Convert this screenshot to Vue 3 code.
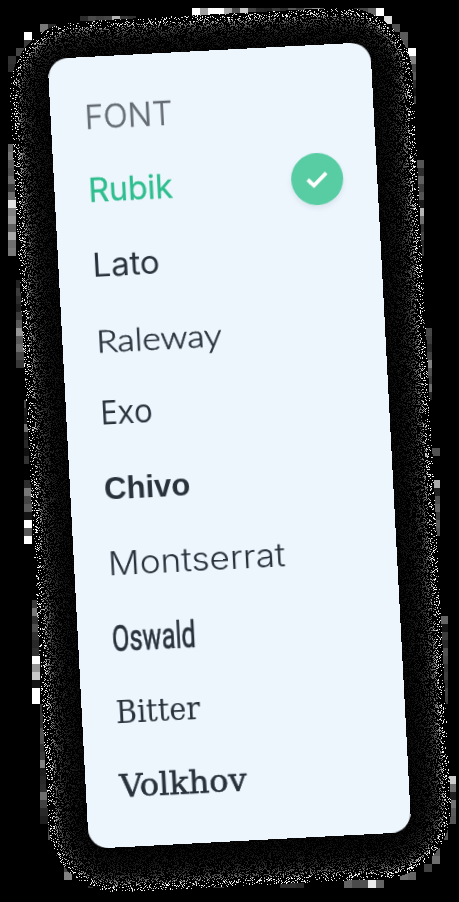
<script setup>
import { onMounted, ref } from 'vue'

const fonts = [
  { name: 'Rubik', cls: 'rubik', selected: true },
  { name: 'Lato', cls: 'lato' },
  { name: 'Raleway', cls: 'raleway' },
  { name: 'Exo', cls: 'exo' },
  { name: 'Chivo', cls: 'chivo' },
  { name: 'Montserrat', cls: 'montserrat' },
  { name: 'Oswald', cls: 'oswald' },
  { name: 'Bitter', cls: 'bitter' },
  { name: 'Volkhov', cls: 'volkhov' },
]

const grain = ref(null)

// Horizontal and vertical runs of 8px tiles at the rim: [column, row, grey levels]
const across = [
  [3, 4, [255]], [3, 5, [60]], [2, 6, [70]], [5, 3, [120, 40]],
  [10, 2, [45, 75, 65, 70, 180, 60, 50]],
  [24, 1, [255, 160, 255, 255, 165, 80, 200, 70, 40, 35, 60, 45, 90, 60, 110, 150, 90, 60, 100, 60, 45, 70, 100, 255]],
  [48, 2, [220]], [49, 3, [80]], [11, 110, [50, 55, 40, 35, 50, 30]],
  [22, 110, [60, 50, 55, 60, 45, 50]], [35, 110, [45, 45, 40]],
  [43, 110, [100, 75, 80, 235, 100]], [50, 109, [110, 100]], [53, 108, [65]],
  [8, 108, [70, 30]], [8, 109, [130]],
]
const down = [
  [1, 7, [50, 45]], [1, 18, [100, 120, 90, 80, 110, 60, 110, 225, 130, 150, 95, 170, 110, 120]],
  [2, 35, [35, 60, 45, 30, 60, 90, 150, 90, 110, 70, 55]],
  [3, 50, [70, 30, 20, 110, 30, 40, 15, 50]], [3, 60, [45, 120, 70, 90, 20, 255, 90, 255]],
  [4, 75, [60, 120, 50, 80, 50, 40, 50, 255, 150, 200, 20, 255, 255]],
  [5, 88, [50, 50, 45, 80, 80, 50, 60, 130, 30, 40, 45, 110, 65, 40, 30]],
  [6, 103, [60, 80]], [7, 105, [70, 60]],
  [50, 4, [90, 80]], [51, 6, [255, 130, 70, 90, 45, 20, 70]],
  [52, 20, [85, 45, 95, 60, 85, 25, 180, 110, 50, 70, 40, 60]],
  [53, 41, [70, 60, 40, 65, 130, 80, 60, 110, 40]],
  [54, 56, [80]], [54, 60, [170, 30, 80, 100, 60, 90, 80]],
  [55, 77, [100, 20, 60, 40, 80, 70, 50, 60, 45, 65, 60]],
  [56, 97, [205, 110, 30, 115, 90, 85]], [55, 103, [60, 85]], [54, 106, [90, 110]],
]

onMounted(() => {
  const W = 459
  const H = 902
  const ctx = grain.value.getContext('2d')
  const tile = (c, r, v) => {
    ctx.fillStyle = `rgb(${v},${v},${v})`
    ctx.fillRect(c * 8, r * 8, 8, 8)
  }
  across.forEach(([c, r, vs]) => vs.forEach((v, i) => tile(c + i, r, v)))
  down.forEach(([c, r, vs]) => vs.forEach((v, i) => tile(c, r + i, v)))

  const img = ctx.getImageData(0, 0, W, H)
  const reach = 40
  const sin = Math.sin(Math.PI / 60)
  const cos = Math.cos(Math.PI / 60)
  let seed = 90217
  const random = () => {
    seed = (Math.imul(seed, 1664525) + 1013904223) >>> 0
    return seed / 4294967296
  }
  for (let y = 0; y < H; y++) {
    for (let x = 0; x < W; x++) {
      const dx = x - 230
      const dy = y - 449.5
      const qx = Math.abs(cos * dx - sin * dy) - 131.5
      const qy = Math.abs(sin * dx + cos * dy) - 366
      const d = Math.hypot(Math.max(qx, 0), Math.max(qy, 0)) - 30
      if (d > reach) continue
      const t = Math.max(0, d / reach)
      const alpha = Math.max(1, 22 * (1 - t) ** 1.5)
      const density = t < 0.75 ? 0.37 : 0.37 - (t - 0.75) * 1.05
      const lit = random() < density
      const v = lit ? Math.min(255, (255 / alpha) * (0.6 + random() * 0.8)) : 0
      const i = (y * W + x) * 4
      img.data[i] = img.data[i + 1] = img.data[i + 2] = v
      img.data[i + 3] = 255
    }
  }
  ctx.putImageData(img, 0, 0)
})
</script>

<template>
  <main class="stage">
    <canvas ref="grain" class="grain" width="459" height="902"></canvas>
    <section class="card">
      <h1 class="title"><span>FONT</span></h1>
      <ul class="list">
        <li v-for="f in fonts" :key="f.name" class="row">
          <span class="name" :class="f.cls">{{ f.name }}</span>
          <span v-if="f.selected" class="badge">
            <svg viewBox="0 0 52 52" width="52" height="52">
              <path d="M16.6 26.6 L22.8 32.6 L35 20" fill="none" stroke="#fff" stroke-width="3.8" />
            </svg>
          </span>
        </li>
      </ul>
    </section>
  </main>
</template>

<style>
body {
  margin: 0;
  background: #000;
}
</style>

<style scoped>
.stage {
  position: relative;
  display: flex;
  justify-content: center;
  align-items: center;
  width: 459px;
  height: 902px;
  overflow: hidden;
  background: #000;
}
.grain {
  position: absolute;
  inset: 0;
}
.card {
  position: relative;
  top: -5.5px;
  left: 0;
  box-sizing: border-box;
  width: 322.5px;
  height: 791px;
  padding: 0 34px 0 34px;
  border-radius: 20px;
  background: #edf5fd;
  transform: rotate(-3deg);
  color: #29323b;
  font: 400 32px/1 Inter, sans-serif;
}
.title {
  display: flex;
  align-items: baseline;
  height: 96px;
  margin: 0;
  color: #646b73;
  font: 300 32px/1 Inter, sans-serif;
}
.title::before {
  content: '';
  height: 72px;
}
.title span {
  -webkit-text-stroke: 0.4px #646b73;
  transform-origin: left;
}
.list {
  margin: 0;
  padding: 0;
  list-style: none;
}
.row {
  display: flex;
  align-items: baseline;
  height: 74.6px;
}
.row::before {
  content: '';
  height: 48.6px;
}
.name {
  transform-origin: left;
  white-space: nowrap;
}
.rubik {
  color: #2dbe8d;
  -webkit-text-stroke: 0.3px #2dbe8d;
}
.lato {
  transform: scaleX(1.03) translateY(1px);
}
.raleway {
  font-family: Lato, sans-serif;
  font-weight: 300;
  -webkit-text-stroke: 0.6px #29323b;
  transform: scaleX(1.1) translateY(1.5px);
}
.exo {
  font-family: 'Open Sans', sans-serif;
  transform: scaleX(0.98);
}
.chivo {
  font-family: 'Liberation Sans', sans-serif;
  font-weight: 700;
  transform: scaleX(0.97);
}
.montserrat {
  font-weight: 300;
  transform: scaleX(1.1) translateY(1px);
}
.oswald {
  font-family: Roboto, sans-serif;
  font-size: 36px;
  font-weight: 400;
  -webkit-text-stroke: 0.6px #29323b;
  transform: scaleX(0.705) translateY(3px);
}
.bitter {
  font-family: 'DejaVu Serif', serif;
  font-stretch: condensed;
}
.volkhov {
  font-family: 'DejaVu Serif', serif;
  font-stretch: condensed;
  -webkit-text-stroke: 0.6px #29323b;
  transform: scaleX(1.115) translateY(-0.5px);
}
.badge {
  display: flex;
  align-self: flex-start;
  width: 52px;
  height: 52px;
  margin: 12px 0 0 auto;
  border-radius: 50%;
  background: #58cda3;
  box-shadow: 0 3px 5px rgba(90, 110, 120, 0.12);
  transform: rotate(3deg);
}
</style>
